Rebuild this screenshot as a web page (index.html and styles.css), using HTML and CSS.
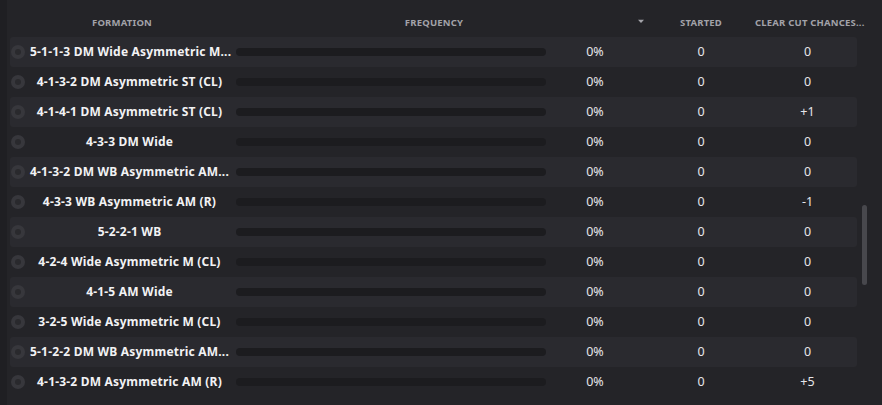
FILE: index.html
```html
<!DOCTYPE html>
<html>
<head>
<meta charset="utf-8">
<link rel="stylesheet" href="styles.css">
</head>
<body>
<div class="page">
  <div class="edge"></div>
  <div class="table">
    <div class="head">
      <div class="h-form">FORMATION</div>
      <div class="h-freq">FREQUENCY</div>
      <div class="h-sort"><svg width="8" height="5" viewBox="0 0 8 5"><path d="M0 0 L8 0 L4 4.5 Z" fill="#a4a4aa"/></svg></div>
      <div class="h-start">STARTED</div>
      <div class="h-ccc">CLEAR CUT CHANCES...</div>
    </div>
    <div class="rows">
      <div class="row alt"><span class="radio"></span><span class="name">5-1-1-3 DM Wide Asymmetric M...</span><span class="bar"></span><span class="val">0%</span><span class="val">0</span><span class="val">0</span></div>
      <div class="row"><span class="radio"></span><span class="name">4-1-3-2 DM Asymmetric ST (CL)</span><span class="bar"></span><span class="val">0%</span><span class="val">0</span><span class="val">0</span></div>
      <div class="row alt"><span class="radio"></span><span class="name">4-1-4-1 DM Asymmetric ST (CL)</span><span class="bar"></span><span class="val">0%</span><span class="val">0</span><span class="val">+1</span></div>
      <div class="row"><span class="radio"></span><span class="name">4-3-3 DM Wide</span><span class="bar"></span><span class="val">0%</span><span class="val">0</span><span class="val">0</span></div>
      <div class="row alt"><span class="radio"></span><span class="name">4-1-3-2 DM WB Asymmetric AM...</span><span class="bar"></span><span class="val">0%</span><span class="val">0</span><span class="val">0</span></div>
      <div class="row"><span class="radio"></span><span class="name">4-3-3 WB Asymmetric AM (R)</span><span class="bar"></span><span class="val">0%</span><span class="val">0</span><span class="val">-1</span></div>
      <div class="row alt"><span class="radio"></span><span class="name">5-2-2-1 WB</span><span class="bar"></span><span class="val">0%</span><span class="val">0</span><span class="val">0</span></div>
      <div class="row"><span class="radio"></span><span class="name">4-2-4 Wide Asymmetric M (CL)</span><span class="bar"></span><span class="val">0%</span><span class="val">0</span><span class="val">0</span></div>
      <div class="row alt"><span class="radio"></span><span class="name">4-1-5 AM Wide</span><span class="bar"></span><span class="val">0%</span><span class="val">0</span><span class="val">0</span></div>
      <div class="row"><span class="radio"></span><span class="name">3-2-5 Wide Asymmetric M (CL)</span><span class="bar"></span><span class="val">0%</span><span class="val">0</span><span class="val">0</span></div>
      <div class="row alt"><span class="radio"></span><span class="name">5-1-2-2 DM WB Asymmetric AM...</span><span class="bar"></span><span class="val">0%</span><span class="val">0</span><span class="val">0</span></div>
      <div class="row"><span class="radio"></span><span class="name">4-1-3-2 DM Asymmetric AM (R)</span><span class="bar"></span><span class="val">0%</span><span class="val">0</span><span class="val">+5</span></div>
    </div>
  </div>
  <div class="scroll"><div class="thumb"></div></div>
  <div class="rim"></div>
</div>
</body>
</html>
```

FILE: styles.css
```css
* { box-sizing: border-box; }
html, body { margin: 0; padding: 0; }
body {
  background: #242428;
  font-family: "Noto Sans", "Liberation Sans", sans-serif;
  width: 882px;
  height: 405px;
  overflow: hidden;
}
.page {
  display: flex;
  height: 405px;
}
.edge {
  width: 7px;
  background: #1f1f23;
  flex: none;
}
.table {
  width: 850px;
  padding-left: 3px;
  flex: none;
}
.head {
  height: 37px;
  display: grid;
  grid-template-columns: 219px 7px 396px 12px 114px 99px;
  align-items: center;
  color: #a2a2a8;
  font-size: 9.5px;
  font-weight: 700;
  letter-spacing: 0.2px;
  padding-top: 7px;
}
.h-form { grid-column: 1; text-align: center; padding-left: 5px; }
.h-freq { grid-column: 3; text-align: center; }
.h-sort { grid-column: 4; display: flex; padding-left: 6px; padding-bottom: 2px; }
.h-start { grid-column: 5; text-align: center; }
.h-ccc { grid-column: 6; white-space: nowrap; margin-left: -3px; }
.rows { display: flex; flex-direction: column; }
.row {
  height: 30px;
  width: 847px;
  display: grid;
  grid-template-columns: 20px 202px 4px 310px 98px 114px 99px;
  align-items: center;
  border-radius: 3px;
}
.row.alt { background: #2a2a2f; }
.radio {
  grid-column: 1;
  width: 14px;
  height: 14px;
  border-radius: 50%;
  background: #37373c;
  margin-left: 1px;
  position: relative;
}
.radio::after {
  content: "";
  position: absolute;
  left: 4px;
  top: 4px;
  width: 6px;
  height: 6px;
  border-radius: 50%;
  background: #29292d;
}
.name {
  grid-column: 2;
  color: #f2f2f4;
  font-size: 12px;
  font-weight: 700;
  letter-spacing: 0.2px;
  text-align: center;
  white-space: nowrap;
  padding: 0 3px 1px 0;
}
.bar {
  grid-column: 4;
  height: 8px;
  border-radius: 4px;
  background: #1c1c1f;
}
.val {
  color: #e6e6ea;
  font-size: 12.5px;
  text-align: center;
  padding-bottom: 1px;
}
.scroll {
  width: 25px;
  flex: none;
  display: flex;
  padding-left: 5px;
}
.thumb {
  margin-top: 205px;
  width: 5px;
  height: 80px;
  border-radius: 3px;
  background: #48484d;
}
.rim {
  flex: 1;
  border-left: 2px solid #18181a;
  background: #2d2f31;
}
```
